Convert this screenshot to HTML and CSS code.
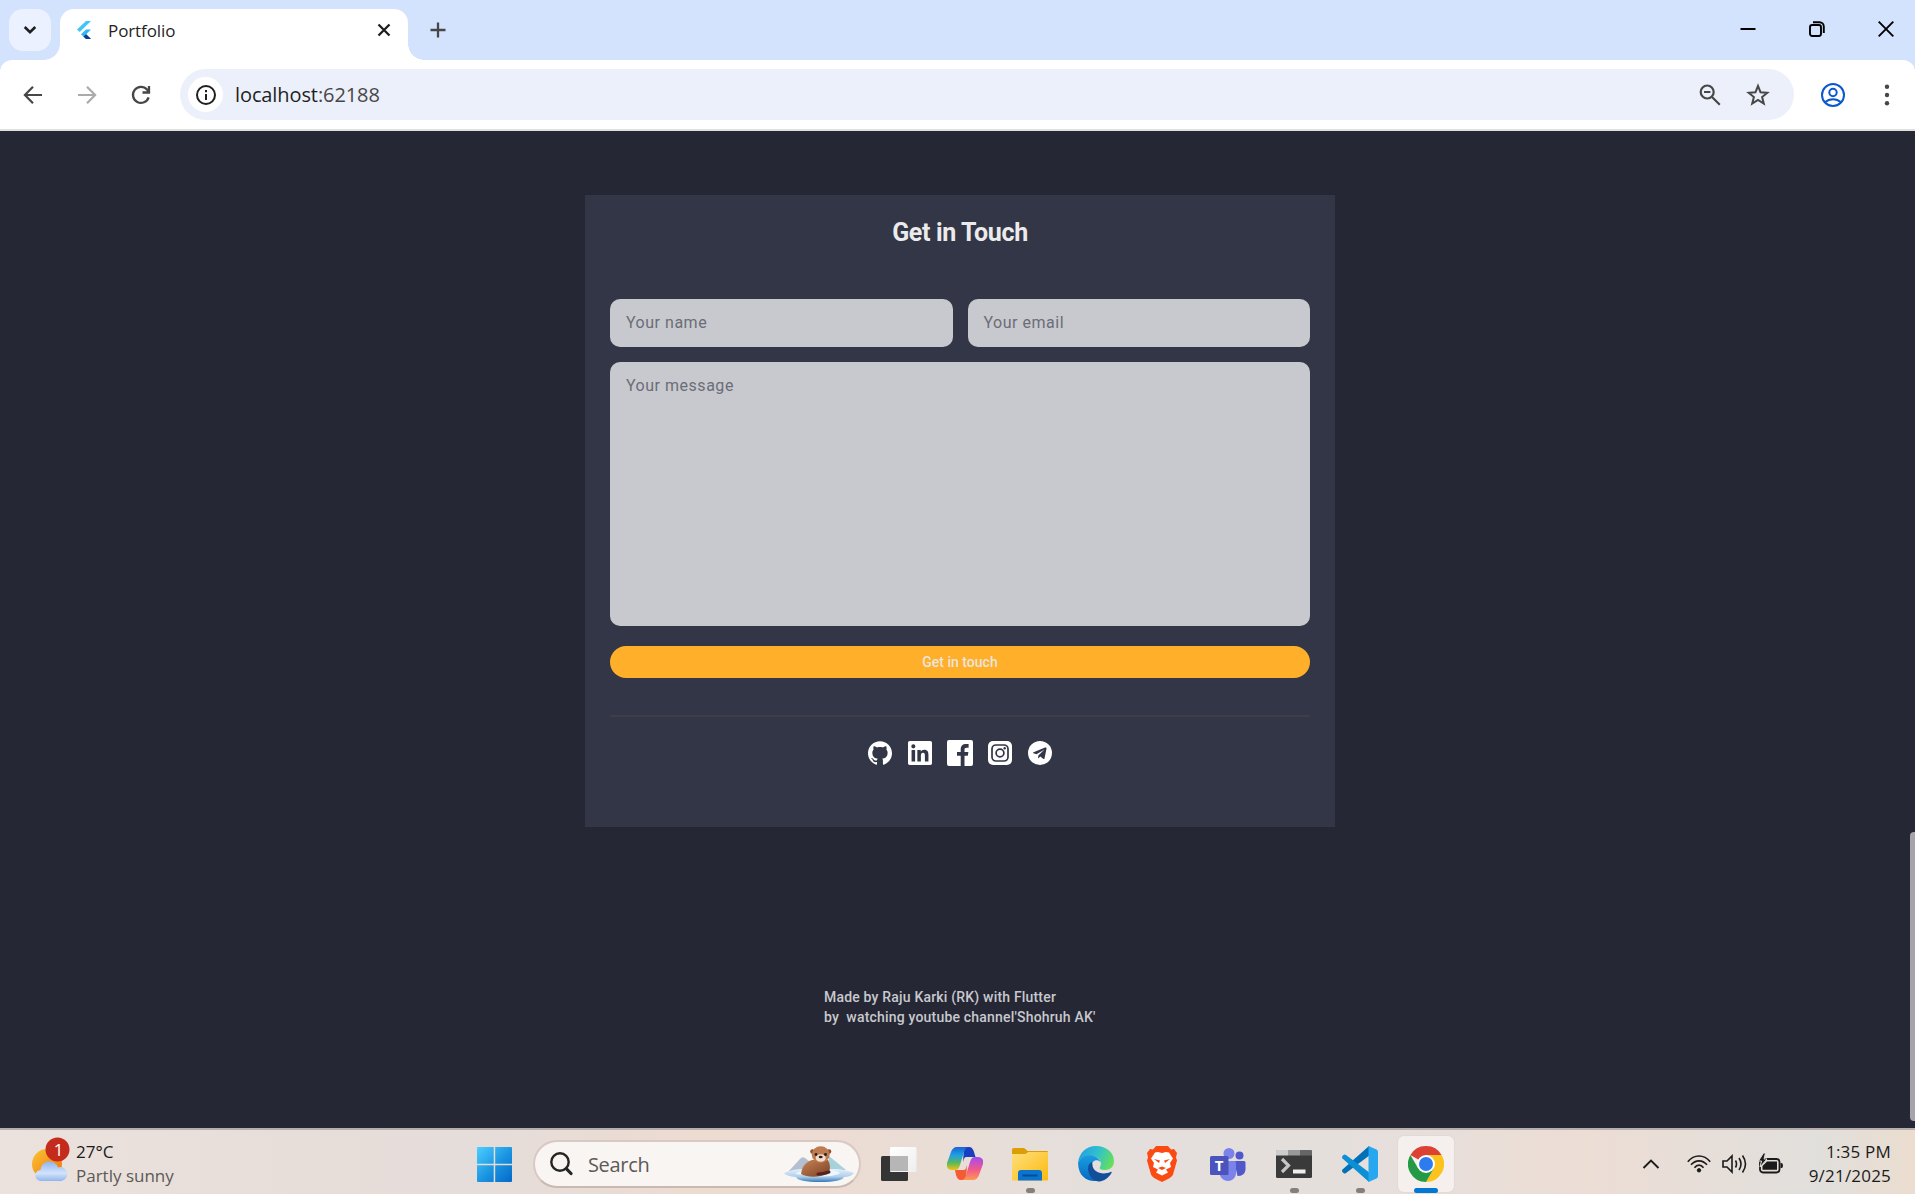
FILE: index.html
```html
<!DOCTYPE html>
<html lang="en">
<head>
<meta charset="utf-8">
<title>Portfolio</title>
<link rel="stylesheet" href="styles.css">
</head>
<body>
<header class="tabstrip">
  <button class="tab-search" aria-label="Search tabs"><svg width="14" height="10" viewBox="0 0 14 10"><path d="M1.7 2 7 7.2 12.3 2" fill="none" stroke="#1f1f1f" stroke-width="2.6"/></svg></button>
  <div class="tab">
    <svg class="favicon" width="14" height="19" viewBox="0 0 14 19"><path d="M9 0h5L2.7 11 0 8.6z" fill="#42c5f8"/><path d="M9 8.5h5L9.2 13.2 14 18H9l-5-4.8z" fill="#35b4f2"/><path d="m6.5 15.6 2.7-2.4L14 18H9z" fill="#0b3c92"/></svg>
    <span class="tab-title">Portfolio</span>
    <svg class="tab-close" width="14" height="14" viewBox="0 0 14 14"><path d="m1.5 1.5 11 11m0-11-11 11" stroke="#1f1f1f" stroke-width="2.3"/></svg>
  </div>
  <svg class="new-tab" width="16" height="16" viewBox="0 0 16 16"><path d="M8 .5v15M.5 8h15" stroke="#474747" stroke-width="2.3"/></svg>
  <div class="window-controls">
    <svg width="16" height="16" viewBox="0 0 16 16"><path d="M.5 8h15" stroke="#000" stroke-width="2"/></svg>
    <svg width="16" height="16" viewBox="0 0 16 16" fill="none" stroke="#000" stroke-width="1.9"><rect x="1" y="4" width="11" height="11" rx="2.2"/><path d="M4 1.2h6.5A4.3 4.3 0 0 1 14.8 5.5V12"/></svg>
    <svg width="16" height="16" viewBox="0 0 16 16"><path d="m.7.7 14.6 14.6m0-14.6L.7 15.3" stroke="#000" stroke-width="1.9"/></svg>
  </div>
</header>
<nav class="toolbar">
  <div class="nav-buttons">
    <svg width="20" height="20" viewBox="0 0 20 20" fill="none" stroke="#474747" stroke-width="2.2"><path d="M19 10H2.5M10 1.800 1.900 10l8.100 8.200"/></svg>
    <svg width="20" height="20" viewBox="0 0 20 20" fill="none" stroke="#ababab" stroke-width="2.2"><path d="M1 10h16.500M10 1.800l8.100 8.200-8.100 8.200"/></svg>
    <svg width="20" height="20" viewBox="0 0 20 20" fill="none" stroke="#474747" stroke-width="2.3"><path d="M17.600 12.300A8 8 0 1 1 16 4.600L18 7M18 1v6.500h-6.500"/></svg>
  </div>
  <div class="omnibox">
    <span class="site-info"><svg width="20" height="20" viewBox="0 0 20 20"><circle cx="10" cy="10" r="9" fill="none" stroke="#1f1f1f" stroke-width="2"/><path d="M10 9v6M10 5v2.200" stroke="#1f1f1f" stroke-width="2"/></svg></span>
    <span class="url">localhost<span class="port">:62188</span></span>
    <svg class="zoom-out" width="22" height="22" viewBox="0 0 22 22" fill="none" stroke="#474747" stroke-width="2.2"><circle cx="8.200" cy="8" r="6.500"/><path d="m13 13 7.800 7.800M5 8h6.400"/></svg>
    <svg class="star" width="24" height="24" viewBox="0 0 24 24"><path d="m12 2.900 2.500 6.300 6.800.5-5.200 4.300 1.700 6.600-5.800-3.600-5.800 3.600 1.700-6.600-5.200-4.300 6.800-.5z" fill="none" stroke="#474747" stroke-width="2"/></svg>
  </div>
  <svg class="profile" width="24" height="24" viewBox="0 0 24 24" fill="none" stroke="#0b57d0" stroke-width="2"><circle cx="12" cy="12" r="11"/><circle cx="12" cy="9.500" r="3.700"/><path d="M4 19.300c4.500-4.200 11.500-4.200 16 0"/></svg>
  <svg class="menu" width="6" height="22" viewBox="0 0 6 22" fill="#474747"><circle cx="3" cy="2.800" r="2.200"/><circle cx="3" cy="11" r="2.200"/><circle cx="3" cy="19.200" r="2.200"/></svg>
</nav>
<main class="page">
  <section class="card">
    <h1>Get in Touch</h1>
    <div class="fields">
      <div class="field">Your name</div>
      <div class="field">Your email</div>
    </div>
    <div class="field message">Your message</div>
    <button class="submit"><span>Get in touch</span></button>
    <hr>
    <div class="social">
      <svg width="24" height="24" viewBox="0 0 24 24" fill="#fff"><path d="M12 .297c-6.630 0-12 5.373-12 12 0 5.303 3.438 9.800 8.205 11.385.6.113.82-.258.82-.577 0-.285-.01-1.040-.015-2.040-3.338.724-4.042-1.610-4.042-1.610C4.422 18.070 3.633 17.700 3.633 17.700c-1.087-.744.084-.729.084-.729 1.205.084 1.838 1.236 1.838 1.236 1.070 1.835 2.809 1.305 3.495.998.108-.776.417-1.305.76-1.605-2.665-.3-5.466-1.332-5.466-5.930 0-1.310.465-2.380 1.235-3.220-.135-.303-.54-1.523.105-3.176 0 0 1.005-.322 3.300 1.230.96-.267 1.980-.399 3-.405 1.020.006 2.040.138 3 .405 2.280-1.552 3.285-1.230 3.285-1.230.645 1.653.24 2.873.12 3.176.765.840 1.230 1.910 1.230 3.220 0 4.610-2.805 5.625-5.475 5.920.42.360.810 1.096.810 2.220 0 1.606-.015 2.896-.015 3.286 0 .315.210.690.825.570C20.565 22.092 24 17.592 24 12.297c0-6.627-5.373-12-12-12"/></svg>
      <svg width="24" height="24" viewBox="0 0 24 24" fill="#fff"><path d="M20.447 20.452h-3.554v-5.569c0-1.328-.027-3.037-1.852-3.037-1.853 0-2.136 1.445-2.136 2.939v5.667H9.351V9h3.414v1.561h.046c.477-.9 1.637-1.850 3.370-1.850 3.601 0 4.267 2.370 4.267 5.455v6.286zM5.337 7.433a2.062 2.062 0 0 1-2.063-2.065 2.064 2.064 0 1 1 2.063 2.065zm1.782 13.019H3.555V9h3.564v11.452zM22.225 0H1.771C.792 0 0 .774 0 1.729v20.542C0 23.227.792 24 1.771 24h20.451C23.200 24 24 23.227 24 22.271V1.729C24 .774 23.200 0 22.222 0h.003z"/></svg>
      <svg class="facebook" width="26" height="26" viewBox="0 0 26 26" fill="#fff"><path d="M2 0h22a2 2 0 0 1 2 2v22a2 2 0 0 1-2 2h-6.500V15.800h3.300l.6-3.900h-3.900V9.600c0-1.200.6-1.900 2-1.900h2.100V4.100c-.9-.1-1.900-.2-2.800-.2-3.400 0-5.100 2-5.100 5v3H10v3.900h3.700V26H2a2 2 0 0 1-2-2V2a2 2 0 0 1 2-2z"/></svg>
      <svg width="24" height="24" viewBox="0 0 24 24"><rect width="24" height="24" rx="5" fill="#fff"/><g fill="none" stroke="#333646" stroke-width="1.700"><rect x="4" y="4" width="16" height="16" rx="4"/><circle cx="12" cy="12" r="3.900"/></g><circle cx="16.700" cy="7.300" r="1.200" fill="#333646"/></svg>
      <svg width="24" height="24" viewBox="0 0 24 24"><circle cx="12" cy="12" r="12" fill="#fff"/><path d="M17 6.600 5.600 11.300c-.8.300-.8.800-.1 1l3 1 7.200-4.400c.4-.2.600 0 .3.200l-5.700 5.300-.2 2.900c.3 0 .5-.1.700-.3l1.500-1.400 3.100 2.300c.6.300 1 .1 1.100-.5l2-9.700c.2-.9-.4-1.400-1.500-1.100z" fill="#333646"/></svg>
    </div>
  </section>
  <footer class="credits">Made by Raju Karki (RK) with Flutter<br>by&nbsp; watching youtube channel'Shohruh AK'</footer>
  <div class="scroll-thumb"></div>
</main>
<footer class="taskbar">
  <div class="weather">
    <svg width="40" height="48" viewBox="0 0 40 48">
      <defs><linearGradient id="sun" x1="0" y1="0" x2="1" y2="1"><stop offset="0" stop-color="#f8c534"/><stop offset="1" stop-color="#f4700c"/></linearGradient><linearGradient id="cloud" x1="0" y1="0" x2="0" y2="1"><stop offset="0" stop-color="#8db5f3"/><stop offset=".6" stop-color="#d3e3fa"/><stop offset="1" stop-color="#91b4ee"/></linearGradient></defs>
      <circle cx="15" cy="27" r="15" fill="url(#sun)"/><path d="M9 44a5.500 5.500 0 0 1-.5-11A9 9 0 0 1 26 30.500 7 7 0 1 1 27 44z" fill="url(#cloud)"/><circle cx="25.500" cy="12.500" r="12" fill="#c42b1c"/>
      <text x="26.500" y="18.500" text-anchor="middle" class="badge-number">1</text>
    </svg>
    <div class="weather-text"><div class="temp">27°C</div><div class="sky">Partly sunny</div></div>
  </div>
  <div class="apps">
    <div class="app start"><svg width="35" height="35" viewBox="0 0 35 35"><defs><linearGradient id="win" x1="0" y1="0" x2="1" y2="1"><stop offset="0" stop-color="#4ccfff"/><stop offset=".55" stop-color="#1a93e0"/><stop offset="1" stop-color="#0469c8"/></linearGradient></defs><path d="M1 0h15.700v16.700H0V1a1 1 0 0 1 1-1zM18.200 0H34a1 1 0 0 1 1 1v15.700H18.200zM0 18.200h16.700V35H1a1 1 0 0 1-1-1zM18.200 18.200H35V34a1 1 0 0 1-1 1H18.200z" fill="url(#win)"/></svg></div>
    <div class="search">
      <svg width="23" height="24" viewBox="0 0 23 24"><circle cx="10" cy="10" r="8.700" fill="none" stroke="#252525" stroke-width="2.400"/><path d="m16.500 16.800 4.500 4.700" stroke="#252525" stroke-width="3.200" stroke-linecap="round"/></svg>
      <span>Search</span>
      <svg class="otter" width="70" height="36" viewBox="0 0 70 36">
        <defs><linearGradient id="ice" x1="0" y1="0" x2="0" y2="1"><stop offset="0" stop-color="#e5f1fa"/><stop offset=".6" stop-color="#aecdea"/><stop offset="1" stop-color="#2f79b8"/></linearGradient><linearGradient id="fur" x1="0" y1="0" x2="1" y2="1"><stop offset="0" stop-color="#c98455"/><stop offset="1" stop-color="#7a3f24"/></linearGradient></defs>
        <path d="m4 26 11-12q3-4 6-2l4 3-2 11z" fill="#b4bfd2"/><path d="m45 10 17 14-18 4z" fill="#a7d2db"/>
        <path d="M0 27q8-4 20-4h34q12 2 16 4-3 4-10 4-2 5-24 5T12 31Q2 30 0 27z" fill="url(#ice)"/>
        <path d="M12 28q-3 0 8-4h28q10 2 7 4-14 5-43 0z" fill="#eef6fd"/>
        <path d="M17 28c1-8 5-12 11-14h16c3 5 2 11 0 14-8 3-20 4-27 0z" fill="url(#fur)"/>
        <circle cx="28.500" cy="5.500" r="2.300" fill="#8d5131"/><circle cx="45" cy="5.500" r="2.300" fill="#8d5131"/><ellipse cx="36.700" cy="8.500" rx="9" ry="8.300" fill="#c07c4e"/><ellipse cx="36.700" cy="12" rx="5" ry="3.800" fill="#f1ddca"/>
        <circle cx="32" cy="8.500" r="1.400" fill="#222"/><circle cx="41.500" cy="8.500" r="1.400" fill="#222"/><ellipse cx="36.700" cy="11" rx="2" ry="1.300" fill="#222"/><path d="M34 28q5 0 11-2" fill="none" stroke="#55241f" stroke-width="3" stroke-linecap="round"/>
      </svg>
    </div>
    <div class="app"><svg width="36" height="34" viewBox="0 0 36 34"><defs><linearGradient id="glass" x1="0" y1="0" x2="1" y2="1"><stop offset="0" stop-color="#fff"/><stop offset="1" stop-color="#eee"/></linearGradient></defs><rect x="0" y="9" width="27" height="25" rx="1.500" fill="#343434"/><rect x="9" y="0" width="26.500" height="25" rx="1" fill="url(#glass)"/><path d="M9 9h18v15H9z" fill="#b6b6b6"/></svg></div>
    <div class="app"><svg width="36" height="34" viewBox="0 0 36 34">
      <defs><linearGradient id="cpa" x1="0" y1="0" x2="0" y2="1"><stop offset="0" stop-color="#1b62d4"/><stop offset=".35" stop-color="#1d9fe6"/><stop offset=".7" stop-color="#5cb85a"/><stop offset="1" stop-color="#f1c40f"/></linearGradient><linearGradient id="cpb" x1="0" y1="0" x2="0" y2="1"><stop offset="0" stop-color="#a34bf0"/><stop offset=".55" stop-color="#f2588c"/><stop offset="1" stop-color="#fb9a50"/></linearGradient></defs>
      <path d="M17 0h5c3 0 4 2 5 5l1.500 5H20c-3 0-3 2-4 5z" fill="#173fc0"/><path d="M19 33h-5c-3 0-4-2-5-5l-1-5h8c3 0 3-2 4-5z" fill="#f45b35"/>
      <path d="M10 0h12c-3 0-4 2-5 5l-4 13c-1 3-2 5-5 5H5c-4 0-6-3-5-7l4-11c1-3 3-5 6-5z" fill="url(#cpa)"/><path d="M26 33H14c3 0 4-2 5-5l4-13c1-3 2-5 5-5h3c4 0 6 3 5 7l-4 11c-1 3-3 5-6 5z" fill="url(#cpb)"/></svg></div>
    <div class="app running"><svg width="36" height="34" viewBox="0 0 36 34"><defs><linearGradient id="fold" x1="0" y1="0" x2="1" y2="1"><stop offset="0" stop-color="#ffe07c"/><stop offset="1" stop-color="#fbb90e"/></linearGradient></defs><path d="M1.500 1H11q1.500 0 2.500 1l2 2H35a1 1 0 0 1 1 1v10H0V2.500Q0 1 1.500 1z" fill="#dd9d04"/><path d="M0 7h12.500q1.500 0 2.500-1l1-1h20v27.500a1 1 0 0 1-1 1H0z" fill="url(#fold)"/><path d="M6 33.500V26q0-3 3-3h18q3 0 3 3v7.500z" fill="#0a74cf"/><path d="M10.500 28.500h15" stroke="#094a92" stroke-width="2"/></svg></div>
    <div class="app"><svg width="36" height="36" viewBox="0 0 36 36">
      <defs><linearGradient id="edt" x1="0" y1=".3" x2="1" y2=".6"><stop offset="0" stop-color="#249fe2"/><stop offset=".5" stop-color="#31c1cd"/><stop offset="1" stop-color="#67e05a"/></linearGradient><linearGradient id="edb" x1="0" y1="0" x2="0" y2="1"><stop offset="0" stop-color="#1a9de0"/><stop offset="1" stop-color="#0669c2"/></linearGradient></defs>
      <path d="M0 17C1 7 8 0 18 0c11 0 18 7 18 15 0 6-4 9-9 9-4 0-6-1-5-3 2-3 1-8-4-10C11 8 3 11 0 17z" fill="url(#edt)"/><path d="M0 17C3 10 11 7 18 11c2 1 4 3 4.500 5-3-3-8-2-9 3-2 9 6 14 13 13-9 6-26 4-26.500-15z" fill="url(#edb)"/><path d="M14 16c-3 1-5 5-3.500 10 2 7 8 11 13 9 5-1 8-5 10-8 .5-1 0-1.500-1-1-9 4-18-1-18-7z" fill="#124f9b"/></svg></div>
    <div class="app"><svg width="30" height="36" viewBox="0 0 30 36"><path d="M9 0h12l3 3.500 3-.5 3 4-1 4.500 1 3-4 14c-1 3-6 5-11 7.500C10 33.500 5 31.500 4 28.500L0 14.500l1-3L0 7l3-4 3 .5z" fill="#fb4b12"/><path d="m15 7 4-1 3 .5 4 6-3 4.500 1 4-5 2.500 2 3-6 3-6-3 2-3L6 21l1-4-3-4.500 4-6 3-.5z" fill="#fff"/><path d="m7 13 6 1.500-1 2.500zm16 0-6 1.500 1 2.500zM11 22l4-1.500 4 1.500-4 2z" fill="#fb4b12"/></svg></div>
    <div class="app"><svg width="36" height="33" viewBox="0 0 36 33"><circle cx="19" cy="5.500" r="5.500" fill="#7b83eb"/><circle cx="29.500" cy="7.500" r="4" fill="#5059c9"/><path d="M24 13h10q1.500 0 1.500 1.500V22q-1 6-8 6z" fill="#5059c9"/><path d="M11 13h13.500q1.500 0 1.500 1.500V25c0 4-3 8-8 8-4 0-8-3-8-7z" fill="#7b83eb"/><rect x="0" y="8" width="18.500" height="19" rx="1.500" fill="#4b53bc"/><text x="9.200" y="22.500" text-anchor="middle" class="teams-letter">T</text></svg></div>
    <div class="app running"><svg width="36" height="28" viewBox="0 0 36 28"><rect width="36" height="28" rx="1.500" fill="#3a3a3a"/><path d="M1 0h11v5.500H0V1a1 1 0 0 1 1-1z" fill="#ccc"/><path d="M12 0h12v5.500H12z" fill="#999"/><path d="M24 0h11l1 1v4.500H24z" fill="#666"/><path d="m6 9 6.500 6.500L6 22" fill="none" stroke="#c5c5c5" stroke-width="3.200"/><path d="M17 19.500h12.500v4H17z" fill="#eee"/></svg></div>
    <div class="app running"><svg width="36" height="36" viewBox="0 0 36 36"><path d="m27 0 1 9L4 27q-1.500 1-2.500 0l-1-1q-1-1.500 0-2.500z" fill="#0070b8"/><path d="m27 36 1-9L4 9q-1.500-1-2.500 0l-1 1q-1 1.500 0 2.500z" fill="#0d8fd6"/><path d="m26.500 0 8 3.500Q36 4.200 36 6v24q0 1.800-1.500 2.500l-8 3.500z" fill="#27a7f0"/></svg></div>
    <div class="app active"><svg width="36" height="36" viewBox="0 0 36 36"><path d="M18 18 2.410 9A18 18 0 0 1 33.590 9z" fill="#dd4133"/><path d="M18 9h15.590A18 18 0 0 1 18 36l7.800-13.500z" fill="#fcc31c"/><path d="M2.410 9A18 18 0 0 0 18 36l7.800-13.500H10.200z" fill="#259a46"/><circle cx="18" cy="18" r="9" fill="#fff"/><circle cx="18" cy="18" r="7" fill="#2c7cf0"/></svg></div>
  </div>
  <div class="tray">
    <svg width="18" height="10" viewBox="0 0 18 10"><path d="m1.500 9 7.500-7.500L16.500 9" fill="none" stroke="#1b1b1b" stroke-width="1.900"/></svg>
    <svg class="wifi" width="24" height="18" viewBox="0 0 24 18" fill="none" stroke="#1b1b1b" stroke-width="1.700"><path d="M.8 6.700Q5.500 1 12 1t11.200 5.700M4 9.800q3.500-4 8-4t8 4M7.500 12.800q2-2.600 4.500-2.600t4.500 2.600"/><circle cx="12" cy="15.300" r="1.700" fill="#1b1b1b" stroke-width="1"/></svg>
    <svg class="volume" width="25" height="20" viewBox="0 0 25 20" fill="none" stroke="#1b1b1b" stroke-width="1.600"><path d="M1 7h4l5-5v16l-5-5H1zM13.500 6.500q2 3.500 0 7M17 4q4 6 0 12M20.500 1.500q6 8.500 0 17"/></svg>
    <svg class="battery" width="24" height="20" viewBox="0 0 24 20"><rect x="1" y="5" width="19.500" height="13.500" rx="3" fill="none" stroke="#1b1b1b" stroke-width="1.800"/><path d="M3.500 15.800V12L8 7.500h10v8.300zM21.500 9h1q1.500 0 1.500 2.500T22.500 14h-1z" fill="#1b1b1b"/><path d="M4.500-1-.5 7h3l-1.500 6L8 5H5L6.500-1z" fill="#1b1b1b" stroke="#e2deda" stroke-width="1"/></svg>
    <div class="clock"><div class="time">1:35 PM</div><div class="date">9/21/2025</div></div>
  </div>
</footer>
</body>
</html>
```
FILE: styles.css
```css
* { box-sizing: border-box; }
body { margin: 0; width: 1915px; height: 1194px; overflow: hidden; display: flex; flex-direction: column; background: #d3e2fd; font-family: "Open Sans", "Noto Sans", sans-serif; }
svg { display: block; flex: none; }
button { border: 0; padding: 0; font: inherit; }

.tabstrip { height: 60px; display: flex; align-items: flex-start; background: #d3e2fd; }
.tab-search { width: 42px; height: 42px; margin: 9px 0 0 9px; border-radius: 14px; background: #ebf1fe; display: grid; place-items: center; }
.tab { position: relative; width: 348px; height: 51px; margin: 9px 0 0 9px; border-radius: 14px 14px 0 0; background: #fff; display: flex; align-items: center; padding: 0 17px 9px; }
.tab::before, .tab::after { content: ""; position: absolute; bottom: 0; width: 16px; height: 16px; }
.tab::before { left: -16px; background: radial-gradient(circle at 0 0, transparent 15.5px, #fff 16px); }
.tab::after { right: -16px; background: radial-gradient(circle at 100% 0, transparent 15.5px, #fff 16px); }
.tab-title { margin-left: 17px; font-size: 17px; letter-spacing: -.1px; color: #1f1f1f; line-height: 24px; padding-top: 2px; }
.tab-close { margin-left: auto; }
.new-tab { margin: 22px 0 0 22px; }
.window-controls { margin: 21px 21px 0 auto; display: flex; gap: 53px; }

.toolbar { height: 71px; background: #fff; border-radius: 12px 12px 0 0; box-shadow: inset 0 -2px #e0e0e0; display: flex; align-items: center; padding: 0 25px 2px 23px; }
.nav-buttons { display: flex; gap: 34px; width: 157px; }
.omnibox { width: 1614px; height: 51px; border-radius: 26px; background: #ecf0fa; display: flex; align-items: center; padding: 0 24px 0 8px; }
.site-info { width: 35px; height: 35px; border-radius: 50%; background: #fff; display: grid; place-items: center; }
.url { margin-left: 12px; font-size: 20px; color: #1f1f1f; letter-spacing: -.1px; }
.port { color: #474747; }
.zoom-out { margin-left: auto; }
.star { margin-left: 25px; }
.profile { margin-left: 27px; }
.menu { margin-left: auto; }

.page { position: relative; height: 997px; background: #252734; display: flex; flex-direction: column; align-items: center; padding: 64px 0 0 5px; font-family: Roboto, sans-serif; }
.card { width: 750px; height: 632px; background: #333646; padding: 23px 25px 22px; display: flex; flex-direction: column; }
h1 { margin: 0; height: 30px; line-height: 30px; font-size: 25px; font-weight: 700; letter-spacing: -.35px; color: #ebebeb; text-align: center; }
.fields { display: flex; gap: 15px; margin-top: 51px; }
.field { flex: 1; height: 48px; border-radius: 10px; background: #c8c9ce; color: #6b6d78; font-size: 16px; letter-spacing: .52px; line-height: 47px; padding-left: 16px; }
.message { flex: none; height: 264px; margin-top: 15px; }
.submit { height: 32px; margin-top: 20px; border-radius: 16px; background: #ffaf2a; color: #ebe5dd; font-size: 14px; font-weight: 500; letter-spacing: 0; line-height: 32px; }
hr { width: 100%; height: 2px; border: 0; margin: 37px 0 24px; background: #403d49; }
.social { display: flex; justify-content: center; align-items: center; gap: 16px; height: 24px; }
.facebook { margin: 0 -1px; }
.credits { width: 272px; margin-top: 160px; color: #c8c9ce; font-size: 14px; font-weight: 500; letter-spacing: .19px; line-height: 20px; white-space: nowrap; }
.scroll-thumb { position: absolute; right: 0; top: 701px; width: 5px; height: 289px; border-radius: 4px 0 0 4px; background: #a6a3ab; }

.taskbar { height: 66px; display: grid; grid-template-columns: 461px 998px 1fr; border-top: 2px solid #b6aeac; background: linear-gradient(90deg, #ebe2dd 0, #e7ddd9 15%, #e5ddda 25%, #ecdbd1 36%, #ecdcd3 44%, #e4dfdc 58%, #e5dfdc 70%, #ecddd5 83%, #e1dfdc 95%, #ebddcf 100%); color: #1b1b1b; }
.weather { display: flex; padding: 7px 0 0 32px; }
.weather-text { margin-left: 4px; margin-top: 3px; font-size: 17px; line-height: 24px; }
.sky { color: #5c5957; }
.badge-number { font: 17px "Open Sans", sans-serif; fill: #fff; }
.apps { display: flex; align-items: center; height: 64px; padding-top: 4px; }
.app { position: relative; width: 66px; height: 60px; display: grid; place-items: center; }
.app svg { position: relative; }
.start { padding-left: 1px; }
.running::after, .active::after { content: ""; position: absolute; bottom: 1px; left: 28.5px; width: 9px; height: 5px; border-radius: 3px; background: #857e7b; }
.active::before { content: ""; position: absolute; left: 5px; top: 2px; width: 56px; height: 56px; border-radius: 6px; background: #f5f0ed; box-shadow: 0 0 0 1px #e4dad5; }
.active::after { left: 21px; width: 24px; background: #0078d4; }
.search { width: 328px; height: 48px; margin: 0 5px 0 6px; border: 2px solid #d8c9c2; border-bottom-color: #c9b9b0; border-radius: 24px; background: #f9f5f3; display: flex; align-items: center; padding: 0 5px 0 15px; color: #5c5957; font-size: 20px; letter-spacing: -.3px; }
.search span { margin-left: 15px; }
.otter { margin-left: auto; }
.tray { display: flex; align-items: center; height: 64px; padding: 4px 24px 0 183px; }
.wifi { margin-left: 27px; }
.volume { margin-left: 11px; }
.battery { margin-left: 12px; overflow: visible; }
.clock { margin-left: auto; text-align: right; font-size: 17px; letter-spacing: .2px; line-height: 24px; white-space: nowrap; }
.teams-letter { font: 700 15px "Open Sans", sans-serif; fill: #fff; }
```
